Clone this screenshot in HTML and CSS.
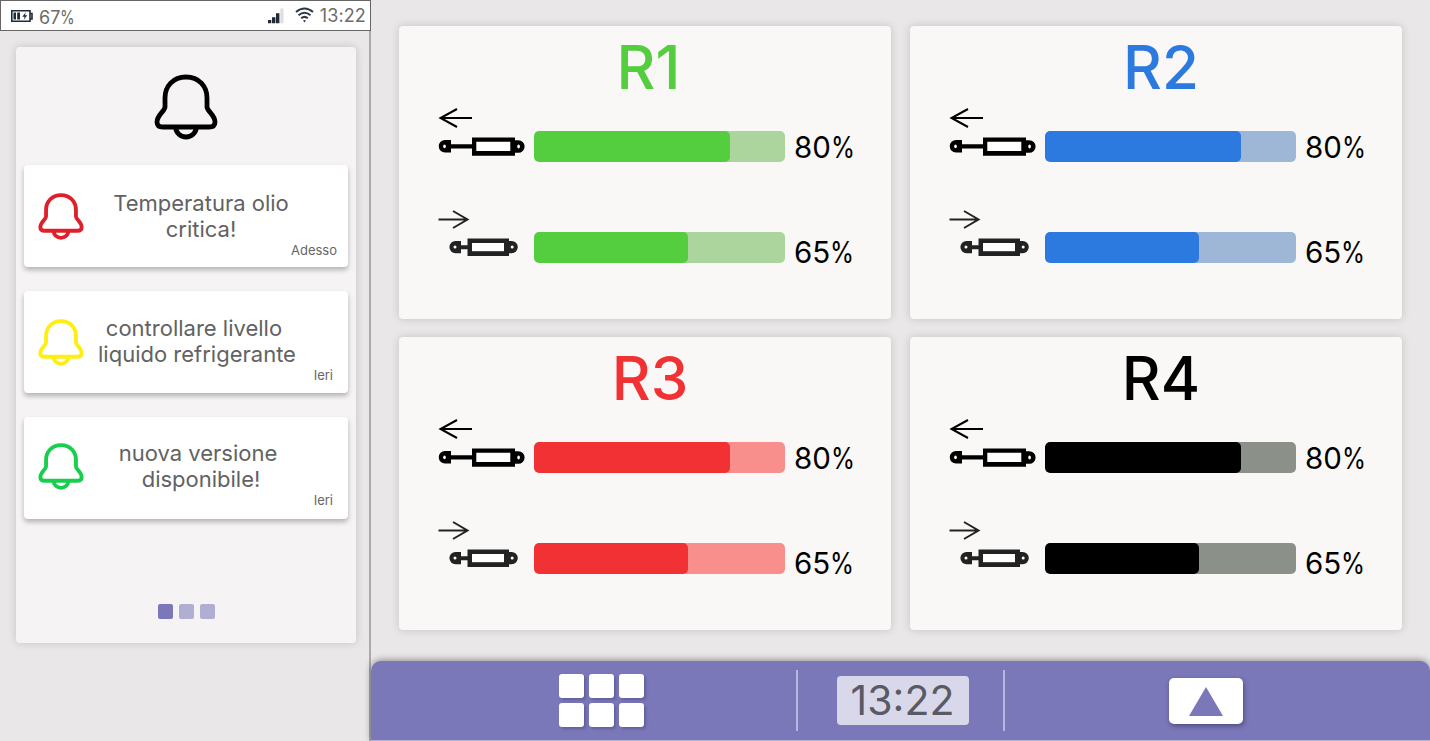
FILE: index.html
```html
<!DOCTYPE html>
<html lang="it">
<head>
<meta charset="utf-8">
<title>Pannello cilindri</title>
<link rel="stylesheet" href="styles.css">
</head>
<body>
<svg class="defs" width="0" height="0">
  <symbol id="bell" viewBox="0 0 64 66">
    <path d="M32 3C19 3 11 12.500 11 24V33C11 37 3 41 3 48C3 51.500 5.500 53 9 53H55C58.500 53 61 51.500 61 48C61 41 53 37 53 33V24C53 12.500 45 3 32 3ZM21.500 53C22 59 26.500 63 32 63S42 59 42.500 53" fill="none" stroke="currentColor" stroke-linejoin="round"/>
  </symbol>
  <symbol id="extended" viewBox="0 0 99 62">
    <path d="M37 14H5M22 5L5.500 14L22 23" fill="none" stroke="#000" stroke-width="2"/>
    <path d="M16 36H10A6.200 6.200 0 0 0 10 48.500H16V44.600H37V51.800H80V48.800H83.300A6.200 6.200 0 0 0 83.300 36.200H80V33.500H37V40.200H16Z" fill="#000"/>
    <path d="M41.300 37.800H75.300V47H41.300Z" fill="#fff"/>
    <ellipse cx="9.500" cy="42.300" rx="1.300" ry="1.900" fill="#fff"/><ellipse cx="83.600" cy="42.500" rx="1.300" ry="1.900" fill="#fff"/>
  </symbol>
  <symbol id="retracted" viewBox="0 0 99 62">
    <path d="M3.500 14.500H33M18 6L32.500 14.500L18 23" fill="none" stroke="#222" stroke-width="2"/>
    <path d="M26 36H20.500A6.100 6.100 0 0 0 20.500 48.200H26V44.300H32.500V51H74V48.200H76.700A6.100 6.100 0 0 0 76.700 36H74V33.500H32.500V40.200H26Z" fill="#222"/>
    <path d="M37 38H69V46.200H37Z" fill="#fff"/>
    <circle cx="20" cy="42" r="1.500" fill="#fff"/><circle cx="77.200" cy="42" r="1.500" fill="#fff"/>
  </symbol>
</svg>
<div class="app">
  <aside class="side">
    <header class="status">
      <svg class="battery" width="22" height="12" viewBox="0 0 22 12"><path d="M.8.8H19V11.200H.8ZM19 3.500H21V9H19" fill="none" stroke="#202a38" stroke-width="1.600"/><path d="M2.500 2.500H5V9.500H2.500ZM6.200 2.500H9V9.500H6.200ZM14.800 2.200L11.300 6.800H13.600L12.800 9.800L16.300 5.300H14Z" fill="#202a38"/></svg>
      <span class="charge">67<span class="pct">%</span></span>
      <svg class="signal" width="16" height="16" viewBox="0 0 16 16"><path d="M0 12H3.300V15.300H0ZM4 9.300H7.400V15.300H4ZM8 5.300H11.400V15.300H8Z" fill="#202a38"/><path d="M12.300.5H15.500V15.300H12.300Z" fill="#dedede"/></svg>
      <svg class="wifi" width="19" height="16" viewBox="0 0 19 16"><path d="M1 5Q9.500-2 18 5M3.500 8.300Q9.500 3.300 15.500 8.300M6.200 11.300Q9.500 8.500 12.800 11.300" fill="none" stroke="#303947" stroke-width="2"/><path d="M8 13.200H11L9.500 15.500Z" fill="#202a38"/></svg>
      <span class="status-time">13:22</span>
    </header>
    <section class="alerts">
      <svg class="bell-main"><use href="#bell"/></svg>
      <article class="alert first">
        <svg class="bell red"><use href="#bell"/></svg>
        <p class="message"><span>Temperatura olio</span><span>critica!</span></p>
        <time class="when now">Adesso</time>
      </article>
      <article class="alert second">
        <svg class="bell yellow"><use href="#bell"/></svg>
        <p class="message"><span>controllare livello</span><span class="shift">liquido refrigerante</span></p>
        <time class="when">Ieri</time>
      </article>
      <article class="alert third">
        <svg class="bell green"><use href="#bell"/></svg>
        <p class="message"><span>nuova versione</span><span class="shift">disponibile!</span></p>
        <time class="when">Ieri</time>
      </article>
      <nav class="pager"><i class="on"></i><i></i><i></i></nav>
    </section>
  </aside>
  <main class="main">
    <div class="cards">
      <section class="card r1"><h2>R1</h2>
        <div class="row"><svg class="cyl"><use href="#extended"/></svg><div class="bar"><div class="fill high"></div></div><span class="value">80<span class="pct">%</span></span></div>
        <div class="row low"><svg class="cyl"><use href="#retracted"/></svg><div class="bar"><div class="fill"></div></div><span class="value">65<span class="pct">%</span></span></div>
      </section>
      <section class="card r2"><h2>R2</h2>
        <div class="row"><svg class="cyl"><use href="#extended"/></svg><div class="bar"><div class="fill high"></div></div><span class="value">80<span class="pct">%</span></span></div>
        <div class="row low"><svg class="cyl"><use href="#retracted"/></svg><div class="bar"><div class="fill"></div></div><span class="value">65<span class="pct">%</span></span></div>
      </section>
      <section class="card r3"><h2>R3</h2>
        <div class="row"><svg class="cyl"><use href="#extended"/></svg><div class="bar"><div class="fill high"></div></div><span class="value">80<span class="pct">%</span></span></div>
        <div class="row low"><svg class="cyl"><use href="#retracted"/></svg><div class="bar"><div class="fill"></div></div><span class="value">65<span class="pct">%</span></span></div>
      </section>
      <section class="card r4"><h2>R4</h2>
        <div class="row"><svg class="cyl"><use href="#extended"/></svg><div class="bar"><div class="fill high"></div></div><span class="value">80<span class="pct">%</span></span></div>
        <div class="row low"><svg class="cyl"><use href="#retracted"/></svg><div class="bar"><div class="fill"></div></div><span class="value">65<span class="pct">%</span></span></div>
      </section>
    </div>
    <footer class="dock">
      <div class="grid-icon"><i></i><i></i><i></i><i></i><i></i><i></i></div>
      <div class="clock-wrap"><span class="clock">13:22</span></div>
      <div class="up"><svg width="34" height="29" viewBox="0 0 34 29"><path d="M17 0L34 29H0Z" fill="#7b78ba"/></svg></div>
    </footer>
  </main>
</div>
</body>
</html>
```
FILE: styles.css
```css
* { box-sizing: border-box; }
body { margin: 0; font-family: Inter, sans-serif; background: #e9e7e8; overflow: hidden; }
.defs { display: none; }
svg { display: block; flex: none; }
.app { display: flex; width: 1430px; height: 741px; }
.side { width: 371px; border-right: 2px solid #aaa9ab; }
.status { display: flex; align-items: flex-start; width: 371px; height: 31px; padding: 0 4px 0 10px; border: 1px solid #666; background: #fff; color: #6c6c6c; font-size: 18px; line-height: 30px; }
.battery { margin: 9px 6px 0 0; }
.charge { padding-top: 2px; }
.pct { display: inline-block; transform: scaleX(.83); transform-origin: left; }
.charge .pct { margin-right: -3px; }
.signal { margin: 7px 11px 0 auto; }
.wifi { margin: 6px 6px 0 0; }
.status-time { letter-spacing: .15px; }
.alerts { display: flex; flex-direction: column; align-items: center; width: 340px; height: 596px; margin: 16px 0 0 16px; padding-top: 27px; border-radius: 4px; background: #f5f3f4; box-shadow: 0 0 9px rgba(0,0,0,.16); }
.bell-main { width: 64px; height: 66px; color: #000; stroke-width: 4.8; }
.alert { position: relative; width: 324px; height: 102px; margin-top: 24px; border-radius: 4px; background: #fff; box-shadow: 0 3px 5px rgba(0,0,0,.27); }
.alert.first { margin-top: 25px; }
.bell { position: absolute; left: 14px; top: 28px; width: 46px; height: 47px; stroke-width: 5.4; }
.third .bell { top: 26px; }
.red { color: #df202a; }
.yellow { color: #ffee12; }
.green { color: #18cf4d; }
.message { display: flex; flex-direction: column; align-items: center; width: 260px; margin: 0 0 0 47px; padding-top: 25px; color: #626262; font-size: 22px; line-height: 26px; font-weight: 370; }
.second .message { width: 246px; padding-top: 24px; }
.third .message { width: 254px; padding-top: 23px; }
.shift { padding-left: 6px; }
.when { position: absolute; right: 15px; top: 76px; color: #666; font-size: 13px; line-height: 17px; }
.when.now { right: 11px; top: 77px; }
.third .when { top: 75px; }
.pager { display: flex; gap: 6px; margin: 85px 0 0 1px; }
.pager i { width: 15px; height: 15px; border-radius: 2px; background: #b0afd3; }
.pager .on { background: #7b78ba; }
.main { display: flex; flex-direction: column; flex: 1; }
.cards { display: grid; grid-template-columns: 492px 492px; grid-template-rows: 293px 293px; gap: 18px 19px; padding: 26px 28px 31px; }
.card { border-radius: 4px; background: #f9f8f6; box-shadow: 0 0 9px rgba(0,0,0,.16); }
.card h2 { margin: 0; padding: 2px 0 0 10px; height: 78px; line-height: 78px; font-size: 60px; font-weight: 500; text-align: center; }
.r1 h2 { padding-left: 7px; }
.row { display: flex; align-items: flex-start; height: 101px; padding-left: 36px; }
.cyl { width: 99px; height: 62px; }
.bar { width: 251px; height: 31px; margin-top: 27px; border-radius: 5px; overflow: hidden; }
.fill { width: 154px; height: 31px; border-radius: 5px; }
.fill.high { width: 196px; }
.value { margin: 28px 0 0 9px; font-size: 29.500px; line-height: 31px; }
.low .value { margin-top: 32px; }
.r1 h2 { color: #54cd3e; } .r1 .bar { background: #abd59d; } .r1 .fill { background: #54cd3e; }
.r2 h2 { color: #2c79df; } .r2 .bar { background: #9eb7d7; } .r2 .fill { background: #2c79df; }
.r3 h2 { color: #f13133; } .r3 .bar { background: #f88f8d; } .r3 .fill { background: #f13133; }
.r4 h2 { color: #000; } .r4 .bar { background: #8b9088; } .r4 .fill { background: #000; }
.dock { display: flex; align-items: flex-start; width: 1059px; height: 80px; border-radius: 10px 10px 0 0; border-bottom: 1px solid #b5b3d6; background: #7b78ba; box-shadow: 0 -1px 7px rgba(0,0,0,.4); }
.grid-icon { display: grid; grid-template-columns: repeat(3, 25px); grid-template-rows: repeat(2, 24px); gap: 5px; margin: 13.400px 0 0 188px; }
.grid-icon i { border-radius: 3px; background: #fff; box-shadow: 2px 2px 3px rgba(60,58,110,.4); }
.clock-wrap { display: flex; justify-content: center; width: 209px; height: 61px; margin: 9px 0 0 152px; padding-top: 6px; border-left: 2px solid #bab7df; border-right: 2px solid #bab7df; }
.clock { width: 132px; height: 49px; margin-left: 4px; border-radius: 4px; background: #d8d8ea; color: #5a5a64; font-size: 41px; font-weight: 400; line-height: 49px; text-align: center; }
.up { display: flex; justify-content: center; width: 74px; height: 46px; margin: 17.400px 0 0 164px; padding-top: 9px; border-radius: 5px; background: #fff; box-shadow: 1px 2px 5px rgba(30,30,60,.5); }
```
